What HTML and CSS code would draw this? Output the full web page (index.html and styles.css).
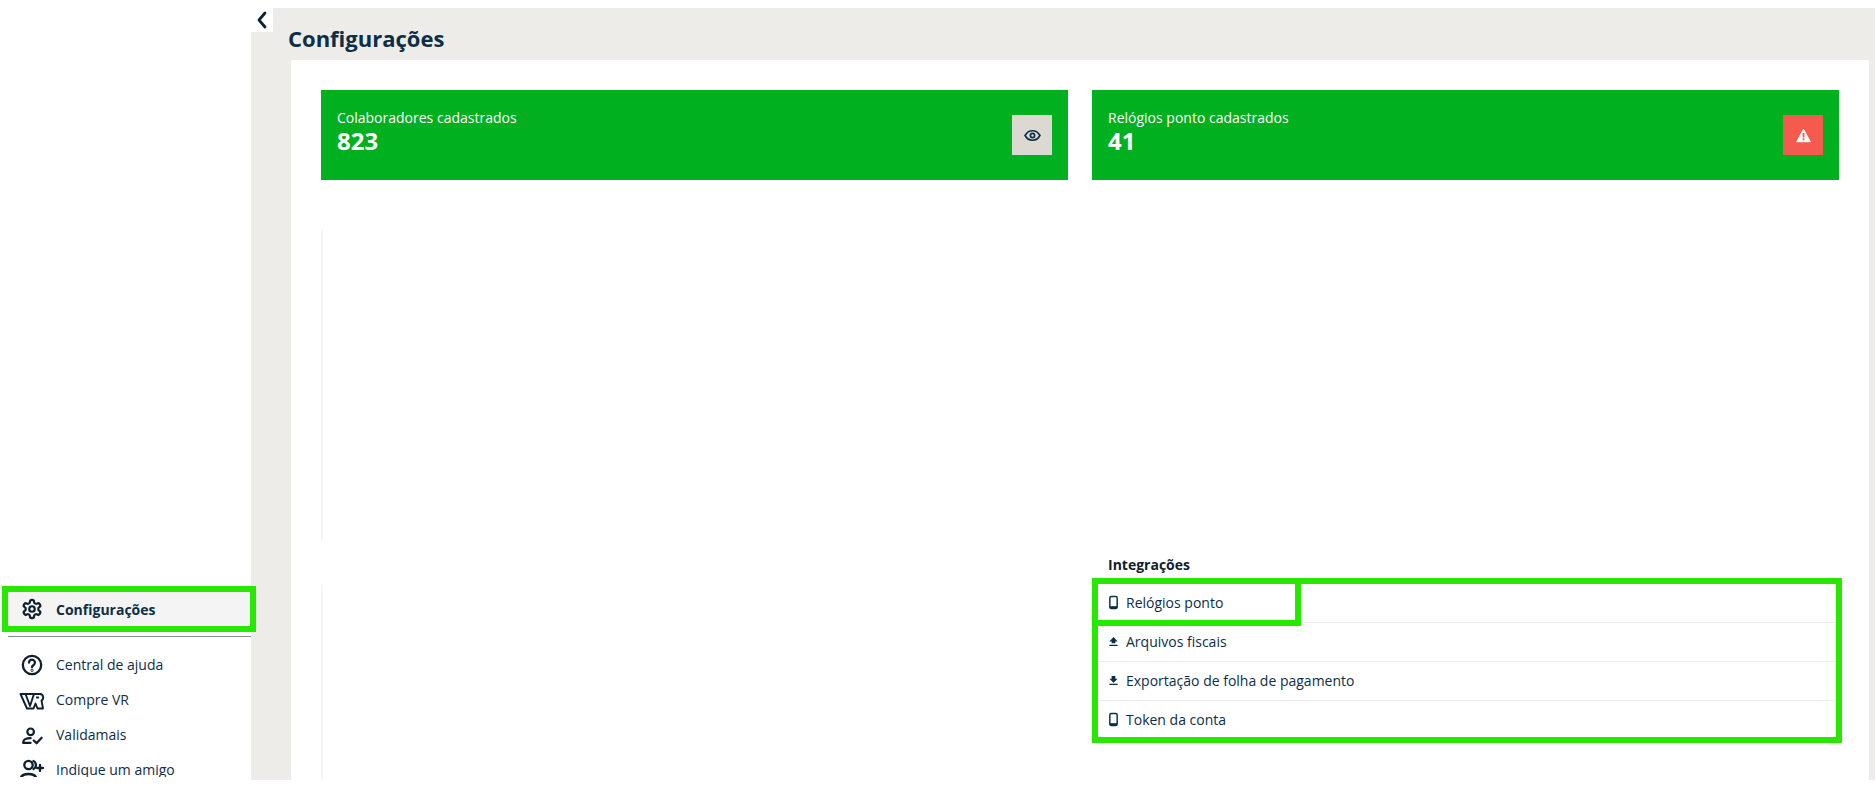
FILE: index.html
```html
<!DOCTYPE html>
<html lang="pt-BR">
<head>
<meta charset="utf-8">
<title>Configurações</title>
<link rel="stylesheet" href="styles.css">
</head>
<body>
<div class="app">
  <aside class="sidebar">
    <a class="nav-item nav-active">
      <svg class="nav-icon" viewBox="0 0 24 24" fill="none" stroke="currentColor" stroke-width="2.400" stroke-linejoin="round"><path d="M12.22 2h-.44a2 2 0 0 0-2 2v.18a2 2 0 0 1-1 1.73l-.43.25a2 2 0 0 1-2 0l-.15-.08a2 2 0 0 0-2.73.73l-.22.38a2 2 0 0 0 .73 2.73l.15.1a2 2 0 0 1 1 1.72v.51a2 2 0 0 1-1 1.74l-.15.09a2 2 0 0 0-.73 2.73l.22.38a2 2 0 0 0 2.73.73l.15-.08a2 2 0 0 1 2 0l.43.25a2 2 0 0 1 1 1.73V20a2 2 0 0 0 2 2h.44a2 2 0 0 0 2-2v-.18a2 2 0 0 1 1-1.73l.43-.25a2 2 0 0 1 2 0l.15.08a2 2 0 0 0 2.73-.73l.22-.39a2 2 0 0 0-.73-2.73l-.15-.08a2 2 0 0 1-1-1.74v-.5a2 2 0 0 1 1-1.74l.15-.09a2 2 0 0 0 .73-2.73l-.22-.38a2 2 0 0 0-2.73-.73l-.15.08a2 2 0 0 1-2 0l-.43-.25a2 2 0 0 1-1-1.73V4a2 2 0 0 0-2-2z"/><circle cx="12" cy="12" r="3"/></svg>
      <span>Configurações</span>
    </a>
    <hr class="nav-sep">
    <a class="nav-item">
      <svg class="nav-icon" viewBox="0 0 24 24" fill="none" stroke="currentColor" stroke-width="2.500" stroke-linecap="round"><circle cx="12" cy="12" r="10"/><path d="M8.800 9.400a3.200 3.200 0 1 1 5 2.600c-1.200.8-1.800 1.300-1.800 2.500"/><circle cx="12" cy="17.800" r=".4"/></svg>
      <span>Central de ajuda</span>
    </a>
    <a class="nav-item">
      <svg class="nav-icon nav-icon-wide" viewBox="0 0 26 24" fill="none" stroke="currentColor" stroke-width="1.900" stroke-linejoin="round"><path d="M1.500 6h19.500a3.500 3.500 0 0 1 1.500 6.500l1.500 8h-5.500l-2-5-2 5H8z"/><path d="M6.500 6l4.500 12 4-12"/><path d="M17 9.500h3"/></svg>
      <span>Compre VR</span>
    </a>
    <a class="nav-item">
      <svg class="nav-icon" viewBox="0 0 24 24" fill="none" stroke="currentColor" stroke-width="2.400" stroke-linecap="round" stroke-linejoin="round"><circle cx="10.500" cy="8.500" r="3.600"/><path d="M2.500 20.500v-1c0-2.500 3-4 8-4"/><path d="M2.500 20.500h8"/><path d="M14 18l3 3 5.500-6"/></svg>
      <span>Validamais</span>
    </a>
    <a class="nav-item">
      <svg class="nav-icon nav-icon-wide" viewBox="0 0 26 24" fill="none" stroke="currentColor" stroke-width="2.300" stroke-linecap="round"><circle cx="9.500" cy="7" r="4.200"/><path d="M14.500 3a4.500 4.500 0 0 1 0 8"/><path d="M1.500 22c0-4 3-6 8-6s8 2 8 6"/><path d="M21 7v6M18 10h6"/></svg>
      <span>Indique um amigo</span>
    </a>
  </aside>

  <main class="main">
    <button class="collapse" type="button" aria-label="Recolher">
      <svg viewBox="0 0 12 18" fill="none" stroke="currentColor" stroke-width="2.800" stroke-linecap="round" stroke-linejoin="round"><path d="M9 2L3 9l6 7"/></svg>
    </button>
    <h1 class="title">Configurações</h1>
    <section class="panel">
      <div class="stats">
        <div class="stat">
          <div class="stat-text">
            <div class="stat-label">Colaboradores cadastrados</div>
            <div class="stat-value">823</div>
          </div>
          <div class="stat-btn stat-btn-view">
            <svg viewBox="0 0 24 24" fill="none" stroke="currentColor" stroke-width="2.400"><path d="M1.500 12C4 7.500 7.700 5.300 12 5.300S20 7.500 22.500 12C20 16.500 16.300 18.700 12 18.700S4 16.500 1.500 12z"/><circle cx="12" cy="12" r="3"/></svg>
          </div>
        </div>
        <div class="stat">
          <div class="stat-text">
            <div class="stat-label">Relógios ponto cadastrados</div>
            <div class="stat-value">41</div>
          </div>
          <div class="stat-btn stat-btn-alert">
            <svg viewBox="0 0 24 24"><path fill="#fff" stroke="#fff" stroke-width="1.500" stroke-linejoin="round" d="M12 2L23 22H1z"/><path fill="#f55a4e" d="M10.500 8h3v7h-3zM10.500 16.500h3v3h-3z"/></svg>
          </div>
        </div>
      </div>

      <div class="columns">
        <div class="col-blank">
          <div class="rule rule-top"></div>
          <div class="rule rule-bottom"></div>
        </div>
        <div class="col-list">
          <h2 class="list-title">Integrações</h2>
          <ul class="list">
            <li class="list-row">
              <svg class="row-icon" viewBox="0 0 12 16"><rect x="2" y="1.500" width="8" height="13" rx="1.500" fill="none" stroke="#0d2e45" stroke-width="1.600"/><rect x="2" y="12" width="8" height="2.500" fill="#0d2e45"/></svg>
              <span>Relógios ponto</span>
            </li>
            <li class="list-row">
              <svg class="row-icon" viewBox="0 0 12 16"><path fill="#0d2e45" d="M6 3l4.500 5H8v2H4V8H1.500zM1.500 11.500h9V13h-9z"/></svg>
              <span>Arquivos fiscais</span>
            </li>
            <li class="list-row">
              <svg class="row-icon" viewBox="0 0 12 16"><path fill="#0d2e45" d="M4 3h4v3h2.500L6 10.500 1.500 6H4zM1.500 11.500h9V13h-9z"/></svg>
              <span>Exportação de folha de pagamento</span>
            </li>
            <li class="list-row">
              <svg class="row-icon" viewBox="0 0 12 16"><rect x="2" y="1.500" width="8" height="13" rx="1.500" fill="none" stroke="#0d2e45" stroke-width="1.600"/><rect x="2" y="12" width="8" height="2.500" fill="#0d2e45"/></svg>
              <span>Token da conta</span>
            </li>
          </ul>
        </div>
      </div>
    </section>
  </main>

  <div class="mark mark-side"></div>
  <div class="mark mark-list"></div>
  <div class="mark mark-row"></div>
</div>
</body>
</html>
```

FILE: styles.css
```css
* { box-sizing: border-box; }

html, body {
  margin: 0;
  height: 789px;
  overflow: hidden;
  background: #fff;
  font-family: "Open Sans", "Noto Sans", sans-serif;
  color: #0d2e45;
}

.app {
  position: relative;
  display: flex;
  align-items: flex-start;
  height: 780px;
  overflow: hidden;
}

/* Sidebar */
.sidebar {
  flex: 0 0 251px;
  height: 777px;
  display: flex;
  flex-direction: column;
  justify-content: flex-end;
  overflow: hidden;
}

.nav-item {
  display: flex;
  align-items: center;
  height: 35px;
  padding-left: 21px;
  gap: 13px;
  font-size: 14px;
  flex: none;
}

.nav-item:last-child { margin-bottom: -10px; }

.nav-active {
  height: 34px;
  margin-left: 8px;
  padding: 2px 0 0 13px;
  background: #f4f4f4;
  font-weight: 700;
  color: #0d2e45;
}

.nav-icon {
  width: 22px;
  height: 22px;
  flex: none;
  color: #0f1f2c;
}

.nav-icon-wide {
  width: 26px;
  height: 24px;
  margin: 0 -2px;
}

.nav-sep {
  flex: none;
  width: 243px;
  margin: 11px 0 10px 8px;
  border: 0;
  border-top: 1px solid #7d8c99;
}

/* Main */
.main {
  position: relative;
  flex: 1;
  height: 772px;
  margin-top: 8px;
  background: #eeece9;
  padding: 0 6px 0 37px;
  display: flex;
  flex-direction: column;
}

.collapse {
  position: absolute;
  left: 0;
  top: 0;
  width: 22px;
  height: 24px;
  padding: 0;
  border: 0;
  background: #fff;
  color: #0f2433;
  display: flex;
  align-items: center;
  justify-content: center;
}

.collapse svg { width: 12px; height: 18px; }

.title {
  margin: 0;
  height: 52px;
  padding-top: 15px;
  font-size: 22px;
  line-height: 30px;
  font-weight: 700;
  color: #0d2e45;
}

.panel {
  margin-left: 3px;
  flex: 1;
  min-height: 0;
  background: #fff;
  border-radius: 2px;
  padding: 30px 30px 0;
}

.stats {
  display: flex;
  gap: 24px;
}

.stat {
  flex: 1;
  height: 90px;
  background: #00b01e;
  padding: 0 16px;
  display: flex;
  align-items: center;
  justify-content: space-between;
  color: #fff;
}

.stat-text { padding-bottom: 7px; }

.stat-label {
  font-size: 14px;
  line-height: 19px;
}

.stat-value {
  font-size: 24px;
  line-height: 28px;
  font-weight: 700;
}

.stat-btn {
  width: 40px;
  height: 40px;
  display: flex;
  align-items: center;
  justify-content: center;
}

.stat-btn-view { background: #dcd9d3; color: #0d2e45; }
.stat-btn-view svg { width: 17px; height: 17px; }
.stat-btn-alert { background: #f55a4e; }
.stat-btn-alert svg { width: 15px; height: 15px; }

/* Lower columns */
.columns {
  display: flex;
  gap: 24px;
  margin-top: 50px;
}

.col-blank {
  flex: 1;
  height: 550px;
  position: relative;
}

.rule {
  position: absolute;
  left: 0;
  width: 2px;
  background: #f6f6f6;
}

.rule-top { top: 0; height: 312px; }
.rule-bottom { top: 355px; bottom: 0; }

.col-list {
  flex: 1;
  padding-top: 325px;
}

.list-title {
  margin: 0 0 0 16px;
  height: 29px;
  font-size: 14px;
  line-height: 19px;
  font-weight: 700;
  color: #0f1f2c;
}

.list {
  list-style: none;
  margin: 0 0 0 6px;
  padding: 0;
  width: 738px;
}

.list-row {
  display: flex;
  align-items: center;
  gap: 7px;
  height: 39px;
  padding: 0 0 2px 10px;
  font-size: 14px;
  border-bottom: 1px solid #ededed;
  color: #0d2e45;
}

.list-row:last-child { border-bottom: 0; }

.row-icon {
  width: 11px;
  height: 15px;
  flex: none;
}

/* Green annotation boxes drawn over the screenshot */
.mark {
  position: absolute;
  border: 6px solid #28e800;
  pointer-events: none;
}

.mark-side { left: 2px; top: 586px; width: 254px; height: 46px; }
.mark-list { left: 1092px; top: 578px; width: 750px; height: 165px; }
.mark-row { left: 1092px; top: 578px; width: 209px; height: 48px; }
```
